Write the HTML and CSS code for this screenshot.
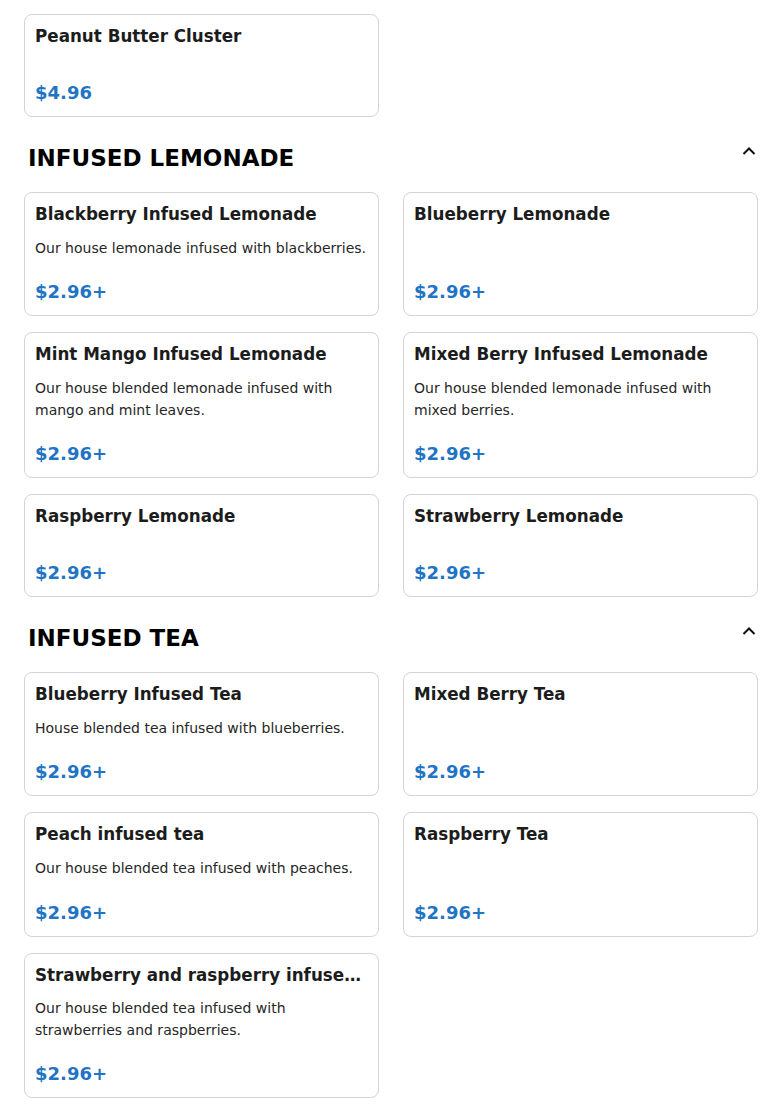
FILE: index.html
```html
<!DOCTYPE html>
<html lang="en">
<head>
<meta charset="utf-8">
<title>Menu</title>
<link rel="stylesheet" href="styles.css">
</head>
<body>
<main class="menu">
  <section class="section section-first">
    <div class="grid">
      <article class="card">
        <h3 class="card-title">Peanut Butter Cluster</h3>
        <p class="card-desc"></p>
        <div class="card-price">$4.96</div>
      </article>
    </div>
  </section>

  <section class="section">
    <header class="section-head">
      <h2 class="section-title">INFUSED LEMONADE</h2>
      <svg class="chev" width="14" height="10" viewBox="0 0 14 10"><path d="M1.5 8 L7 2.5 L12.5 8" fill="none" stroke="#111" stroke-width="2"/></svg>
    </header>
    <div class="grid">
      <article class="card">
        <h3 class="card-title">Blackberry Infused Lemonade</h3>
        <p class="card-desc">Our house lemonade infused with blackberries.</p>
        <div class="card-price">$2.96+</div>
      </article>
      <article class="card">
        <h3 class="card-title">Blueberry Lemonade</h3>
        <p class="card-desc"></p>
        <div class="card-price">$2.96+</div>
      </article>
      <article class="card">
        <h3 class="card-title">Mint Mango Infused Lemonade</h3>
        <p class="card-desc">Our house blended lemonade infused with mango and mint leaves.</p>
        <div class="card-price">$2.96+</div>
      </article>
      <article class="card">
        <h3 class="card-title">Mixed Berry Infused Lemonade</h3>
        <p class="card-desc">Our house blended lemonade infused with mixed berries.</p>
        <div class="card-price">$2.96+</div>
      </article>
      <article class="card">
        <h3 class="card-title">Raspberry Lemonade</h3>
        <p class="card-desc"></p>
        <div class="card-price">$2.96+</div>
      </article>
      <article class="card">
        <h3 class="card-title">Strawberry Lemonade</h3>
        <p class="card-desc"></p>
        <div class="card-price">$2.96+</div>
      </article>
    </div>
  </section>

  <section class="section">
    <header class="section-head">
      <h2 class="section-title">INFUSED TEA</h2>
      <svg class="chev" width="14" height="10" viewBox="0 0 14 10"><path d="M1.5 8 L7 2.5 L12.5 8" fill="none" stroke="#111" stroke-width="2"/></svg>
    </header>
    <div class="grid">
      <article class="card">
        <h3 class="card-title">Blueberry Infused Tea</h3>
        <p class="card-desc">House blended tea infused with blueberries.</p>
        <div class="card-price">$2.96+</div>
      </article>
      <article class="card">
        <h3 class="card-title">Mixed Berry Tea</h3>
        <p class="card-desc"></p>
        <div class="card-price">$2.96+</div>
      </article>
      <article class="card">
        <h3 class="card-title">Peach infused tea</h3>
        <p class="card-desc">Our house blended tea infused with peaches.</p>
        <div class="card-price">$2.96+</div>
      </article>
      <article class="card">
        <h3 class="card-title">Raspberry Tea</h3>
        <p class="card-desc"></p>
        <div class="card-price">$2.96+</div>
      </article>
      <article class="card">
        <h3 class="card-title" title="Strawberry and raspberry infused tea">Strawberry and raspberry infused tea</h3>
        <p class="card-desc">Our house blended tea infused with strawberries and raspberries.</p>
        <div class="card-price">$2.96+</div>
      </article>
    </div>
  </section>
</main>
</body>
</html>
```

FILE: styles.css
```css
html, body {
  margin: 0;
  padding: 0;
  background: #fff;
}
body {
  font-family: "DejaVu Sans", "Noto Sans", sans-serif;
  color: #1b1b1b;
}
.menu {
  padding: 14px 24px 0 24px;
}
.section-head {
  display: flex;
  align-items: flex-start;
  justify-content: space-between;
  margin: 19.25px 0 12px 0;
  padding: 0 4px;
  height: 44px;
}
.section-title {
  margin: 0;
  font-size: 23px;
  line-height: 44px;
  font-weight: 700;
  color: #000;
}
.chev {
  margin-top: 10px;
  margin-right: -2px;
}
.grid {
  display: grid;
  grid-template-columns: 1fr 1fr;
  column-gap: 24px;
  row-gap: 16px;
}
.card {
  border: 1px solid #d4d4d4;
  border-radius: 8px;
  padding: 11px 10px 10px 10px;
  display: flex;
  flex-direction: column;
  min-width: 0;
  background: #fff;
}
.card-title {
  margin: 0;
  font-size: 16.75px;
  line-height: 20px;
  font-weight: 700;
  color: #1c1c1c;
  white-space: nowrap;
  overflow: hidden;
  text-overflow: ellipsis;
}
.card-desc {
  margin: 13.75px 0 0 0;
  font-size: 14px;
  line-height: 21.5px;
  color: #262626;
}
.card-price {
  margin-top: auto;
  padding-top: 20px;
  font-size: 18px;
  line-height: 26px;
  font-weight: 700;
  color: #1f74c4;
}
```
